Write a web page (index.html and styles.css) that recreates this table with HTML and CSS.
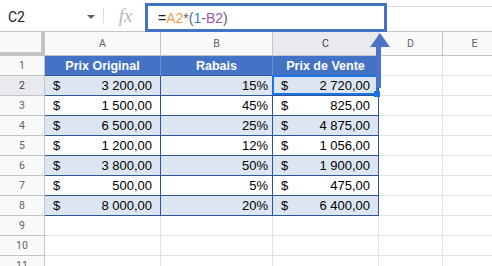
FILE: index.html
```html
<!DOCTYPE html>
<html lang="fr">
<head>
<meta charset="utf-8">
<title>Feuille</title>
<link rel="stylesheet" href="styles.css">
</head>
<body>
<div class="app">
  <div class="toolbar">
    <div class="namebox"><span class="ref">C2</span><span class="caret"></span></div>
    <div class="sep"></div>
    <div class="fx">fx</div>
    <div class="formula"><span class="t-eq">=</span><span class="t-a">A2</span><span class="t-op">*(</span><span class="t-n">1</span><span class="t-op">-</span><span class="t-b">B2</span><span class="t-op">)</span></div>
    <div class="filler"></div>
  </div>
  <div class="sheet">
    <div class="corner"></div>
    <div class="ch">A</div>
    <div class="ch">B</div>
    <div class="ch ch-sel">C</div>
    <div class="ch">D</div>
    <div class="ch">E</div>

    <div class="rh">1</div>
    <div class="cell th">Prix Original</div>
    <div class="cell th">Rabais</div>
    <div class="cell th">Prix de Vente</div>
    <div class="cell"></div>
    <div class="cell"></div>

    <div class="rh rh-sel">2</div>
    <div class="cell td alt money"><span>$</span><span>3 200,00</span></div>
    <div class="cell td alt pct">15%</div>
    <div class="cell td alt money sel"><span>$</span><span>2 720,00</span></div>
    <div class="cell"></div>
    <div class="cell"></div>

    <div class="rh">3</div>
    <div class="cell td money"><span>$</span><span>1 500,00</span></div>
    <div class="cell td pct">45%</div>
    <div class="cell td money"><span>$</span><span>825,00</span></div>
    <div class="cell"></div>
    <div class="cell"></div>

    <div class="rh">4</div>
    <div class="cell td alt money"><span>$</span><span>6 500,00</span></div>
    <div class="cell td alt pct">25%</div>
    <div class="cell td alt money"><span>$</span><span>4 875,00</span></div>
    <div class="cell"></div>
    <div class="cell"></div>

    <div class="rh">5</div>
    <div class="cell td money"><span>$</span><span>1 200,00</span></div>
    <div class="cell td pct">12%</div>
    <div class="cell td money"><span>$</span><span>1 056,00</span></div>
    <div class="cell"></div>
    <div class="cell"></div>

    <div class="rh">6</div>
    <div class="cell td alt money"><span>$</span><span>3 800,00</span></div>
    <div class="cell td alt pct">50%</div>
    <div class="cell td alt money"><span>$</span><span>1 900,00</span></div>
    <div class="cell"></div>
    <div class="cell"></div>

    <div class="rh">7</div>
    <div class="cell td money"><span>$</span><span>500,00</span></div>
    <div class="cell td pct">5%</div>
    <div class="cell td money"><span>$</span><span>475,00</span></div>
    <div class="cell"></div>
    <div class="cell"></div>

    <div class="rh">8</div>
    <div class="cell td alt money"><span>$</span><span>8 000,00</span></div>
    <div class="cell td alt pct">20%</div>
    <div class="cell td alt money"><span>$</span><span>6 400,00</span></div>
    <div class="cell"></div>
    <div class="cell"></div>

    <div class="rh">9</div>
    <div class="cell"></div><div class="cell"></div><div class="cell"></div><div class="cell"></div><div class="cell"></div>
    <div class="rh">10</div>
    <div class="cell"></div><div class="cell"></div><div class="cell"></div><div class="cell"></div><div class="cell"></div>
    <div class="rh">11</div>
    <div class="cell"></div><div class="cell"></div><div class="cell"></div><div class="cell"></div><div class="cell"></div>
  </div>
  <svg class="arrow" width="22" height="62" viewBox="0 0 22 62" aria-hidden="true">
    <polygon points="12,3 2,17 22,17" fill="#4a74c6"/>
    <rect x="8" y="16" width="5" height="42" fill="#4a74c6"/>
  </svg>
</div>
</body>
</html>
```
FILE: styles.css
```css
html, body {
  margin: 0;
  padding: 0;
  background: #ffffff;
  overflow: hidden;
}

.app {
  position: relative;
  width: 492px;
  height: 266px;
  overflow: hidden;
  font-family: "Liberation Sans", Arial, sans-serif;
}

.toolbar {
  display: flex;
  height: 32px;
  box-sizing: border-box;
  border-bottom: 1px solid #c7c7c7;
}

.namebox {
  width: 103px;
  display: flex;
  align-items: center;
  padding-left: 8px;
  box-sizing: border-box;
}

.ref {
  font-family: Roboto, "Liberation Sans", sans-serif;
  font-size: 14px;
  color: #202124;
  padding-top: 2px;
}

.caret {
  margin-left: auto;
  margin-right: 8px;
  margin-top: 3px;
  width: 0;
  height: 0;
  border-top: 4px solid #5f6368;
  border-left: 4px solid transparent;
  border-right: 4px solid transparent;
}

.sep {
  width: 1px;
  height: 15px;
  align-self: center;
  background: #dadce0;
}

.fx {
  width: 41px;
  display: flex;
  align-items: center;
  justify-content: center;
  font-family: "Liberation Serif", "DejaVu Serif", serif;
  font-style: italic;
  font-size: 19px;
  color: #b7b7b7;
  padding-left: 2px;
  box-sizing: border-box;
}

.formula {
  position: relative;
  z-index: 2;
  width: 242px;
  height: 29px;
  margin-top: 3px;
  box-sizing: border-box;
  border: 3px solid #4472c4;
  background: #ffffff;
  padding-left: 10px;
  display: flex;
  align-items: center;
  font-family: "Liberation Sans", Arial, sans-serif;
  font-size: 14px;
  color: #202124;
  white-space: pre;
}

.t-eq { color: #202124; }
.t-a { color: #f29d4a; }
.t-op { color: #5b5f66; }
.t-n { color: #3b7fc4; }
.t-b { color: #9c52b3; }

.filler {
  flex: 1;
  margin-top: 6px;
  border-top: 1px solid #e0e0e0;
}

.sheet {
  display: grid;
  grid-template-columns: 45px 116px 112px 106px 64px 64px;
  grid-template-rows: 24px repeat(11, 20px);
}

.corner {
  background: #f8f9fa;
  box-sizing: border-box;
  border-right: 4px solid #c4c4c4;
  border-bottom: 4px solid #c4c4c4;
}

.ch {
  background: #f8f9fa;
  box-sizing: border-box;
  border-right: 1px solid #c4c4c4;
  border-bottom: 1px solid #c4c4c4;
  display: flex;
  align-items: center;
  justify-content: center;
  font-family: Roboto, "Liberation Sans", sans-serif;
  font-size: 10.5px;
  color: #5f6368;
}

.ch-sel {
  background: #e8eaed;
  color: #3c4043;
}

.rh {
  background: #f8f9fa;
  box-sizing: border-box;
  border-right: 1px solid #c4c4c4;
  border-bottom: 1px solid #c4c4c4;
  display: flex;
  align-items: center;
  justify-content: center;
  font-family: Roboto, "Liberation Sans", sans-serif;
  font-size: 10.5px;
  color: #5f6368;
}

.rh-sel {
  background: #e8eaed;
  color: #3c4043;
}

.cell {
  box-sizing: border-box;
  border-right: 1px solid #e2e2e2;
  border-bottom: 1px solid #e2e2e2;
  background: #ffffff;
  font-family: "Liberation Sans", Arial, sans-serif;
  font-size: 13px;
  color: #000000;
  white-space: nowrap;
}

.th {
  background: #4472c4;
  color: #ffffff;
  font-weight: bold;
  font-size: 12.5px;
  border-right: 1px solid #6f90d0;
  border-bottom: 1px solid #2f5496;
  display: flex;
  align-items: center;
  justify-content: center;
}

.th:nth-child(10) {
  border-right: 1px solid #2f5496;
}

.td {
  border-right: 1px solid #2f5496;
  border-bottom: 1px solid #2f5496;
  display: flex;
  align-items: center;
}

.alt {
  background: #dce6f2;
}

.money {
  justify-content: space-between;
  padding: 0 8px;
}

.pct {
  justify-content: flex-end;
  padding-right: 4px;
}

.sel {
  position: relative;
}

.sel::before {
  content: "";
  position: absolute;
  top: -1px;
  left: -1px;
  right: 0;
  bottom: 0;
  border: 2px solid #1a73e8;
}

.sel::after {
  content: "";
  position: absolute;
  width: 6px;
  height: 6px;
  right: -2px;
  bottom: -2px;
  background: #1a73e8;
  z-index: 1;
}

.arrow {
  position: absolute;
  left: 368px;
  top: 30px;
  z-index: 3;
}
```
